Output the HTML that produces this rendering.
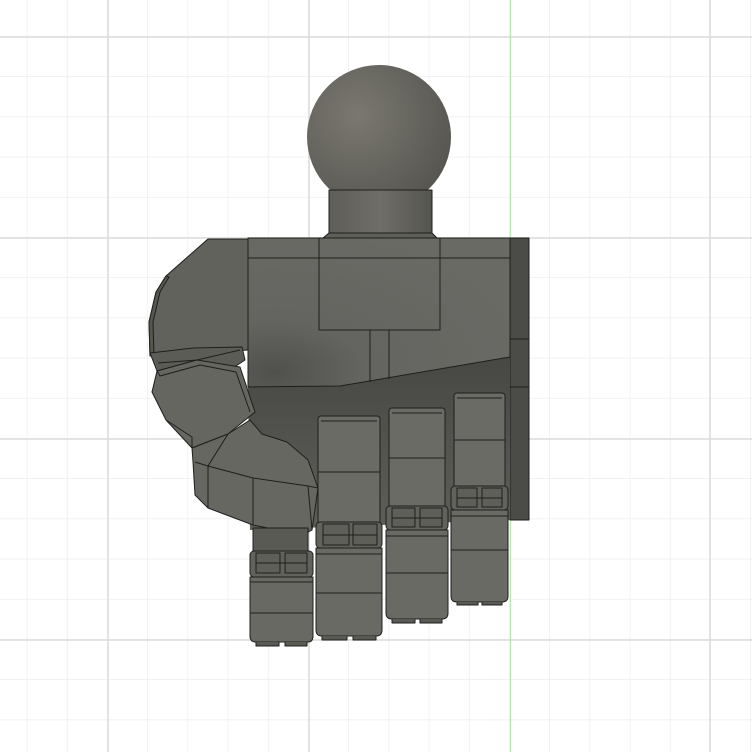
<!DOCTYPE html>
<html><head><meta charset="utf-8"><style>html,body{margin:0;padding:0;background:#fff}svg{display:block}</style></head>
<body>
<svg width="752" height="752" viewBox="0 0 752 752" xmlns="http://www.w3.org/2000/svg">
<defs>
<pattern id="g" width="40.2" height="40.2" patternUnits="userSpaceOnUse" x="-12.8" y="-3.4">
<path d="M40.2 0V40.2M0 40.2H40.2" stroke="#ebebeb" stroke-width="1.3" fill="none"/>
</pattern>
<radialGradient id="ball" cx="0.35" cy="0.35" r="0.75">
<stop offset="0" stop-color="#7a7870"/><stop offset="1" stop-color="#55544f"/></radialGradient>
<linearGradient id="neck" x1="0" x2="1"><stop offset="0" stop-color="#5e5d58"/><stop offset="0.5" stop-color="#6f6e68"/><stop offset="1" stop-color="#555550"/></linearGradient>
<radialGradient id="palm" cx="0.1" cy="0.9" r="1"><stop offset="0" stop-color="#50504c"/><stop offset="0.35" stop-color="#646460"/><stop offset="1" stop-color="#6a6a65"/></radialGradient>
<linearGradient id="under" x1="0" x2="0" y1="0" y2="1"><stop offset="0" stop-color="#474744"/><stop offset="1" stop-color="#5e5e59"/></linearGradient>
</defs>
<rect width="752" height="752" fill="url(#g)"/>
<g stroke="#dcdcdc" stroke-width="1.5">
<line x1="108" y1="0" x2="108" y2="752"/><line x1="309" y1="0" x2="309" y2="752"/>
<line x1="710" y1="0" x2="710" y2="752"/>
<line x1="0" y1="37" x2="752" y2="37"/><line x1="0" y1="238" x2="752" y2="238"/>
<line x1="0" y1="439" x2="752" y2="439"/><line x1="0" y1="640" x2="752" y2="640"/>
</g>
<line x1="510.5" y1="0" x2="510.5" y2="752" stroke="#b9e6b2" stroke-width="1.2"/>

<g stroke="#1e1e1c" stroke-width="1" stroke-linejoin="round">
<circle cx="379" cy="137" r="72" fill="url(#ball)" stroke="none"/>
<rect x="329" y="190" width="103" height="44" fill="url(#neck)"/>
<path d="M323 238 L329 233 H432 L437 238 Z" fill="#5f5e59"/>
<rect x="510" y="238" width="19" height="282" fill="#4b4b47"/>
<line x1="510" y1="339" x2="529" y2="339"/><line x1="510" y1="387" x2="529" y2="387"/>
<path d="M248 387 L510 357 V520 L250 530 Z" fill="url(#under)" stroke="none"/>
<path d="M248 238 H510 V357 L340 386 L248 387 Z" fill="url(#palm)"/>
<line x1="248" y1="258" x2="510" y2="258"/>
<rect x="319" y="238" width="121" height="92" fill="none"/>
<line x1="370" y1="330" x2="370" y2="382"/><line x1="389" y1="330" x2="389" y2="379"/>
<path d="M208 239 H248 V350 L150 356 L149 322 L156 292 L166 276 Z" fill="#62625d"/>
<path d="M166 276 L156 292 L149 322 L150 356 L154 356 L153 322 L160 292 L169 277 Z" fill="#56564f"/>
<path d="M150 353 L193 348 L242 347 L245 360 L233 368 L197 360 L157 371 Z" fill="#5c5c57"/>
<path d="M158 363 L197 360 L240 350" fill="none"/>
<path d="M157 371 L197 360 L240 367 L255 412 L228 434 L192 448 L166 420 L152 392 Z" fill="#666661"/>
<path d="M157 371 L160 376 L200 365 L236 372 L250 412" fill="none"/>
<path d="M166 420 L192 437 L192 448" fill="none"/>
<path d="M192 448 L228 434 L250 420 L262 434 L287 442 L308 460 L318 488 L312 530 L303 535 L253 525 L208 508 L195 495 L193 462 Z" fill="#676762"/>
<path d="M195 462 L208 466 L253 478 L308 486 L318 488" fill="none"/>
<path d="M208 466 V508 M253 478 V525 M308 486 L312 530" fill="none"/>
<path d="M208 466 L228 434" fill="none"/>

<rect x="253" y="528" width="55" height="24" fill="#5a5a55"/>
<rect x="250" y="551" width="63" height="26" rx="4" fill="#62625d"/>
<rect x="256" y="553" width="24" height="20" fill="#5f5f5a"/><rect x="285" y="553" width="22" height="20" fill="#5f5f5a"/>
<line x1="256" y1="563" x2="307" y2="563"/>
<path d="M250 577 H313 V636 Q313 642 308 642 H256 Q250 642 250 636 Z" fill="#696964"/>
<line x1="250" y1="613" x2="313" y2="613"/><line x1="250" y1="582" x2="313" y2="582"/>
<path d="M256 642 V646 H279 V642 M285 642 V646 H307 V642" fill="#5a5a55"/>

<rect x="318" y="416" width="62" height="108" rx="3" fill="#6b6b66"/>
<line x1="318" y1="472" x2="380" y2="472"/><line x1="321" y1="421" x2="377" y2="421"/>
<rect x="316" y="522" width="66" height="26" rx="4" fill="#62625d"/>
<rect x="323" y="524" width="26" height="21" fill="#5f5f5a"/><rect x="353" y="524" width="24" height="21" fill="#5f5f5a"/>
<line x1="323" y1="535" x2="377" y2="535"/>
<path d="M316 548 H382 V630 Q382 636 376 636 H322 Q316 636 316 630 Z" fill="#6a6a65"/>
<line x1="316" y1="554" x2="382" y2="554"/><line x1="316" y1="593" x2="382" y2="593"/>
<path d="M322 636 V640 H347 V636 M353 636 V640 H376 V636" fill="#5a5a55"/>

<rect x="389" y="408" width="56" height="100" rx="3" fill="#6b6b66"/>
<line x1="389" y1="458" x2="445" y2="458"/><line x1="392" y1="413" x2="442" y2="413"/>
<rect x="386" y="506" width="62" height="24" rx="4" fill="#62625d"/>
<rect x="392" y="508" width="23" height="19" fill="#5f5f5a"/><rect x="420" y="508" width="22" height="19" fill="#5f5f5a"/>
<line x1="392" y1="518" x2="442" y2="518"/>
<path d="M386 530 H448 V613 Q448 619 442 619 H392 Q386 619 386 613 Z" fill="#6a6a65"/>
<line x1="386" y1="536" x2="448" y2="536"/><line x1="386" y1="573" x2="448" y2="573"/>
<path d="M392 619 V623 H415 V619 M420 619 V623 H442 V619" fill="#5a5a55"/>

<rect x="454" y="393" width="51" height="95" rx="3" fill="#6b6b66"/>
<line x1="454" y1="440" x2="505" y2="440"/><line x1="457" y1="398" x2="502" y2="398"/>
<rect x="451" y="486" width="57" height="24" rx="4" fill="#62625d"/>
<rect x="457" y="488" width="20" height="19" fill="#5f5f5a"/><rect x="482" y="488" width="20" height="19" fill="#5f5f5a"/>
<line x1="457" y1="498" x2="502" y2="498"/>
<path d="M451 510 H508 V596 Q508 602 502 602 H457 Q451 602 451 596 Z" fill="#6a6a65"/>
<line x1="451" y1="516" x2="508" y2="516"/><line x1="451" y1="550" x2="508" y2="550"/>
<path d="M457 602 V605 H478 V602 M482 602 V605 H502 V602" fill="#5a5a55"/>
</g>
</svg>
</body></html>
